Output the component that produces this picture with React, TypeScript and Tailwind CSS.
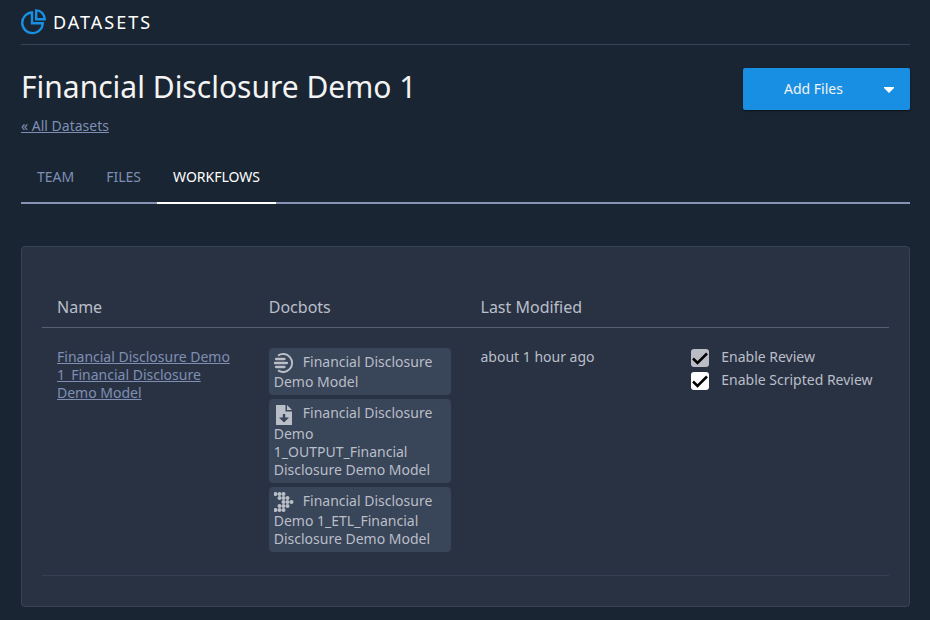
import React from "react";

type IconProps = { className?: string };

function PieIcon({ className }: IconProps) {
  return (
    <svg viewBox="0 0 26 26" className={className} fill="none" stroke="currentColor" strokeWidth="2.400" aria-hidden="true">
      <path d="M11 3.500A10.300 10.300 0 1 0 21.800 14.200H11Z" />
      <path d="M15.200 1.400A8.800 8.800 0 0 1 23.800 10.200H15.200Z" />
    </svg>
  );
}

function ModelIcon({ className }: IconProps) {
  return (
    <svg viewBox="0 0 20 20" className={className} fill="none" stroke="currentColor" aria-hidden="true">
      <path d="M4 2.600A9 9 0 1 1 4 17.400" strokeWidth="1.900" />
      <path d="M2 6H10.500M0.800 10H13M2 14H10.500" strokeWidth="2.300" strokeLinecap="round" />
    </svg>
  );
}

function OutputIcon({ className }: IconProps) {
  return (
    <svg viewBox="0 0 20 20" className={className} fill="currentColor" aria-hidden="true">
      <path
        fillRule="evenodd"
        d="M2 0H11.500V6.500H18V20H2ZM8.800 9V12.500H5L10 17.500L15 12.500H11.200V9Z"
      />
      <path d="M13 0L18 5H13Z" />
    </svg>
  );
}

const dots: [number, number][] = [
  [1.5, 2], [5.5, 2], [9.5, 2],
  [5.5, 6], [9.5, 6], [13.5, 6],
  [9.5, 10], [13.5, 10], [17.5, 10],
  [5.5, 14], [9.5, 14], [13.5, 14],
  [1.5, 18], [5.5, 18], [9.5, 18],
];

function EtlIcon({ className }: IconProps) {
  return (
    <svg viewBox="0 0 20 20" className={className} fill="currentColor" aria-hidden="true">
      {dots.map(([x, y]) => (
        <circle key={`${x}-${y}`} cx={x} cy={y} r="2" />
      ))}
    </svg>
  );
}

const docbots = [
  { icon: ModelIcon, name: "Financial Disclosure Demo Model" },
  { icon: OutputIcon, name: "Financial Disclosure Demo 1_OUTPUT_Financial Disclosure Demo Model" },
  { icon: EtlIcon, name: "Financial Disclosure Demo 1_ETL_Financial Disclosure Demo Model" },
];

function Option({ id, label, disabled }: { id: string; label: string; disabled?: boolean }) {
  return (
    <div className="flex items-start gap-3">
      <span className="relative mt-px size-[18px] shrink-0">
        <input
          id={id}
          type="checkbox"
          defaultChecked
          disabled={disabled}
          className="peer block size-[18px] appearance-none rounded-[3px] bg-white disabled:bg-[#babcc6]"
        />
        <svg
          viewBox="0 0 18 18"
          className="pointer-events-none absolute inset-0 hidden size-[18px] peer-checked:block"
          fill="none"
          stroke="#000"
          strokeWidth="2.500"
          aria-hidden="true"
        >
          <path d="M2 9.500L6.500 14L16 4.500" />
        </svg>
      </span>
      <label htmlFor={id}>{label}</label>
    </div>
  );
}

export default function App() {
  return (
    <div className="min-h-screen bg-[#192532] pr-5 pb-3 pl-[21px] font-['Noto_Sans',sans-serif] text-sm leading-[18px] text-[#babec8]">
      <header className="flex h-[45px] items-center gap-[6px] border-b border-[#384356] text-white">
        <PieIcon className="size-[26px] text-[#188fe2]" />
        <span className="text-lg leading-6 tracking-[2px]">DATASETS</span>
      </header>

      <main>
        <div className="flex items-start justify-between pt-[23px]">
          <div>
            <h1 className="text-[30px] leading-[38px] text-[#f3f3f3]">Financial Disclosure Demo 1</h1>
            <a href="#datasets" className="mt-[11px] block w-fit text-[#7f8fb3] underline">
              « All Datasets
            </a>
          </div>
          <button
            type="button"
            className="flex h-[42px] w-[167px] items-center rounded-[2px] bg-[#188fe2] pr-4 text-[#f3f3f3] shadow-[0_1px_2px_rgba(0,0,0,0.5)]"
          >
            <span className="flex-1">Add Files</span>
            <svg viewBox="0 0 10 6" className="mt-[2px] h-[6px] w-[10px]" fill="#fff" aria-hidden="true">
              <path d="M0 0H10V1L5 6L0 1Z" />
            </svg>
          </button>
        </div>

        <nav className="mt-[25px] flex border-b-2 border-[#8693b5] text-[#7f8fb3]">
          <a href="#team" className="-mb-[2px] px-4 pt-2 pb-[18px]">TEAM</a>
          <a href="#files" className="-mb-[2px] px-4 pt-2 pb-[18px]">FILES</a>
          <a href="#workflows" aria-current="page" className="-mb-[2px] border-b-2 border-white px-4 pt-2 pb-[16px] text-white">
            WORKFLOWS
          </a>
        </nav>

        <section className="mt-[42px] rounded-[4px] border border-[#384356] bg-[#293243] px-5 pt-[50px] pb-[30px]">
          <table className="w-full table-fixed border-collapse text-left align-top">
            <thead>
              <tr className="border-b border-[#566074] text-base leading-5">
                <th className="px-[15px] pb-[10px] font-normal">Name</th>
                <th className="px-[15px] pb-[10px] font-normal">Docbots</th>
                <th className="px-[15px] pb-[10px] font-normal">Last Modified</th>
                <td />
              </tr>
            </thead>
            <tbody>
              <tr className="border-b border-[#384154] align-top">
                <td className="px-[15px] py-5">
                  <a href="#workflow" className="text-[#7f8fb3] underline">
                    Financial Disclosure Demo 1_Financial Disclosure Demo Model
                  </a>
                </td>
                <td className="px-[15px] pt-5 pb-[23px]">
                  <ul className="flex flex-col gap-1">
                    {docbots.map(({ icon: Icon, name }) => (
                      <li key={name} className="rounded-[4px] bg-[#394558] px-[5px] pt-[5px] pb-1">
                        <Icon className="mr-[9px] inline-block size-5 align-middle" />
                        {name}
                      </li>
                    ))}
                  </ul>
                </td>
                <td className="px-[15px] py-5">about 1 hour ago</td>
                <td className="px-[14px] py-5">
                  <div className="flex flex-col gap-1">
                    <Option id="review" label="Enable Review" disabled />
                    <Option id="scripted-review" label="Enable Scripted Review" />
                  </div>
                </td>
              </tr>
            </tbody>
          </table>
        </section>
      </main>
    </div>
  );
}
